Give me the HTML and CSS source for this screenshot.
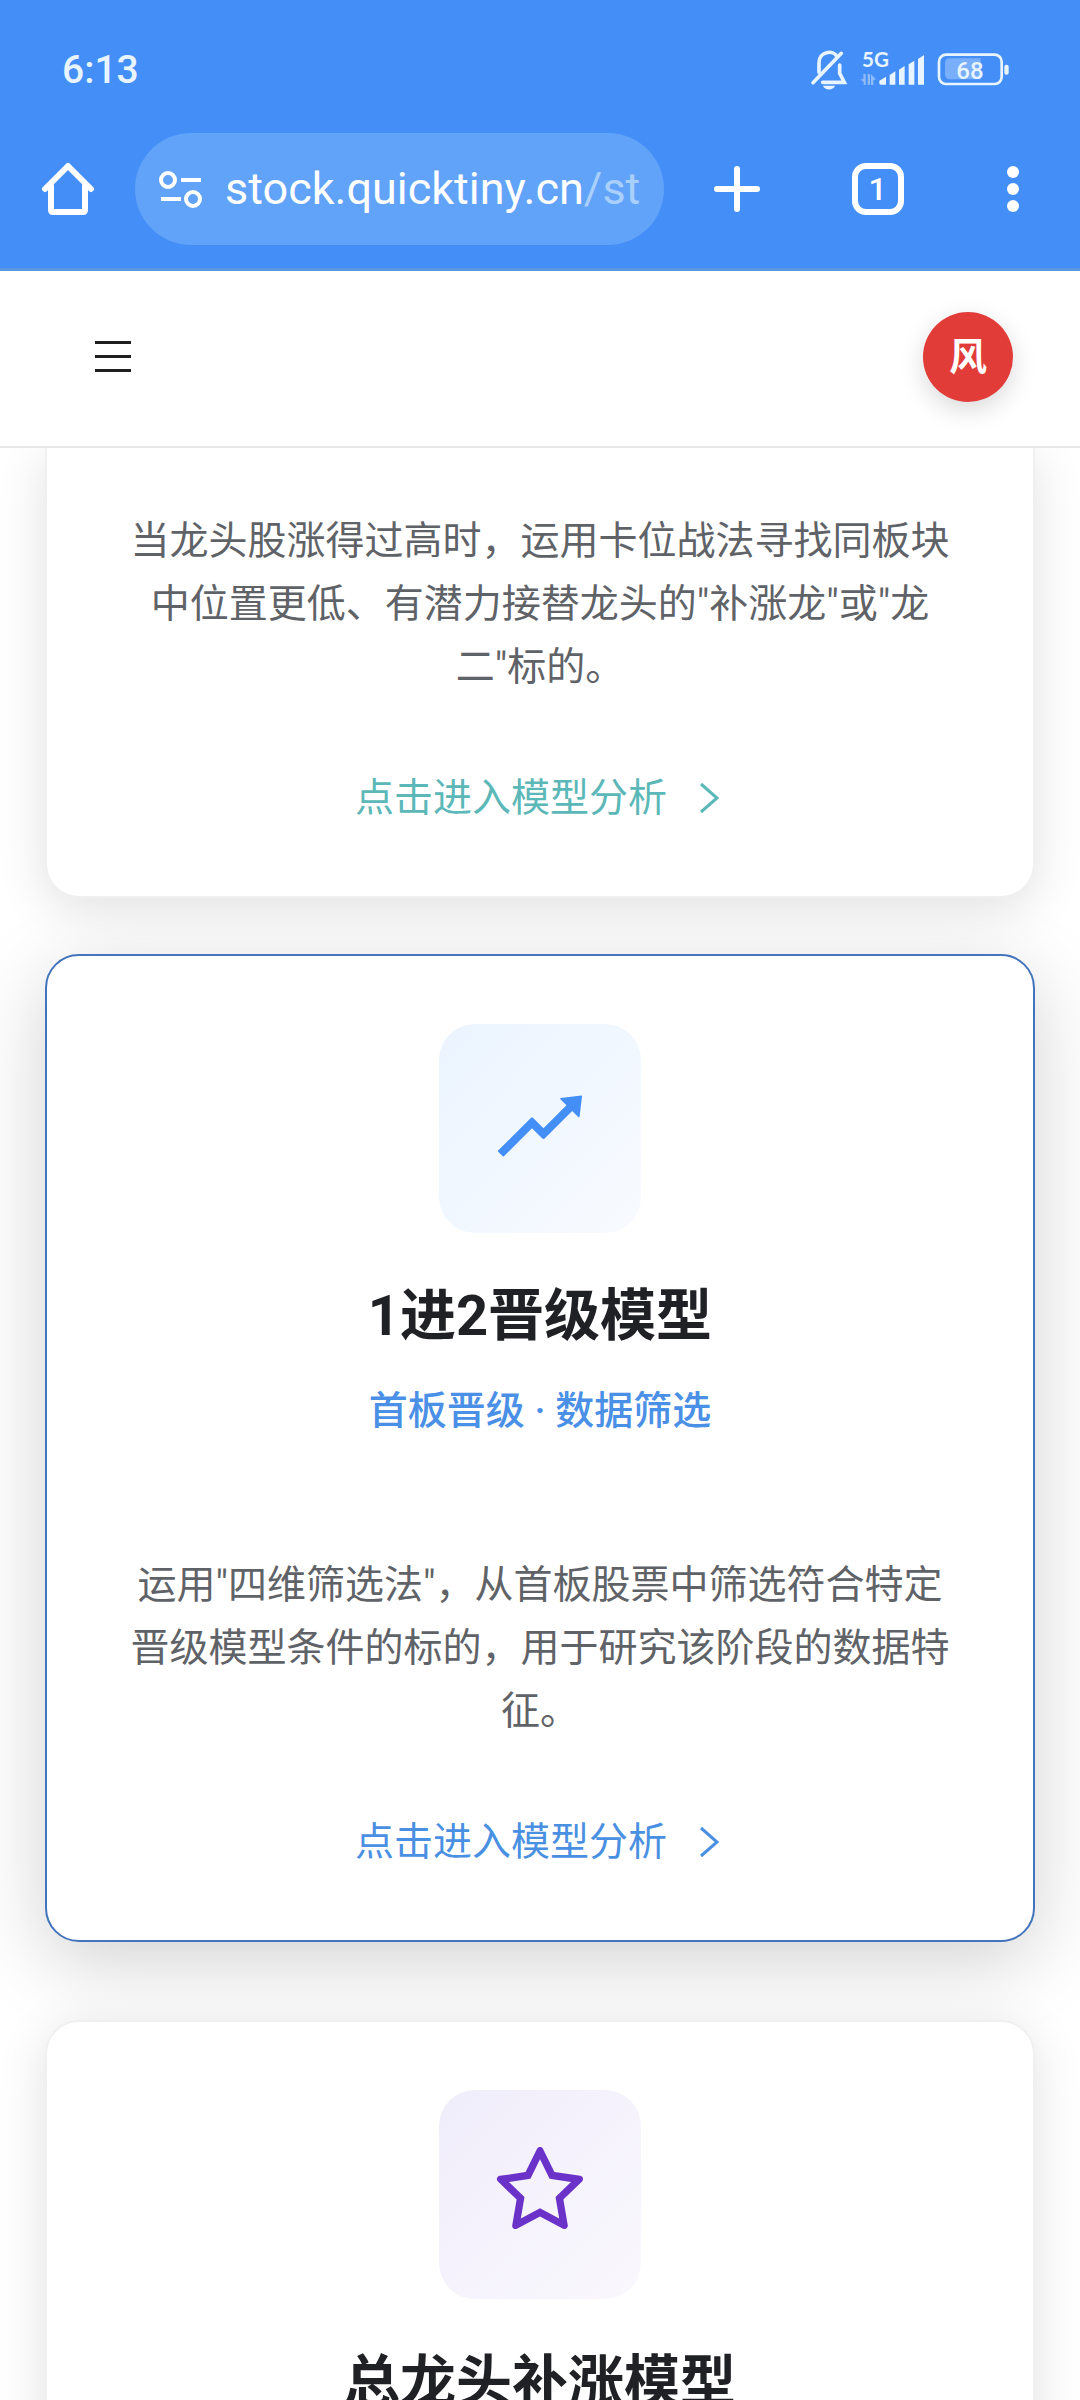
FILE: index.html
```html
<!DOCTYPE html>
<html lang="zh-CN">
<head>
  <meta charset="UTF-8">
  <meta name="viewport" content="width=device-width, initial-scale=1">
  <title>stock.quicktiny.cn</title>
  <link rel="stylesheet" href="styles.css">
</head>
<body>
  <div class="screen">
    <div class="browser">
      <div class="status-bar">
        <span class="clock">6:13</span>
        <svg class="status-icons" viewBox="90 69 600 162" fill="#e8f4ff">
          <!-- muted bell -->
          <g fill="none" stroke="#e8f4ff" stroke-width="11" stroke-linecap="round" stroke-linejoin="round">
            <path d="M117 157V128C117 94 160 88 171 110"/>
            <path d="M179 135V160L193 187H128" stroke-linejoin="miter"/>
            <path d="M99 188L184 100"/>
          </g>
          <path d="M129 197h36c-5 15-31 15-36 0z"/>
          <!-- signal -->
          <text class="network" x="246" y="142">5G</text>
          <path class="faint" d="M257 162v33h-6v-9l-10-8h9v-16zM263 162h7v32h-7zM273 195v-33l15 17h-8v16z"/>
          <path d="M298 190v-8l20-12v24h-16a4 4 0 0 1-4-4zM329 165l17-11v40h-17zM357 149l17-11v56h-17zM386 133l17-11v72h-17zM414 117l18-12v89h-18z"/>
          <!-- battery -->
          <rect x="477" y="104" width="188" height="88" rx="21" fill="none" stroke="#e8f4ff" stroke-width="8"/>
          <path class="charge" d="M510 115h92v63h-92q-15 0-15-15v-33q0-15 15-15z"/>
          <rect x="673" y="134" width="13" height="30" rx="6"/>
          <text class="level" x="570" y="176" text-anchor="middle">68</text>
        </svg>
      </div>
      <div class="toolbar">
        <button class="tool tool-home" aria-label="主页">
          <svg width="54" height="54" viewBox="0 0 54 54" fill="none" stroke="#fff" stroke-width="6" stroke-linecap="round" stroke-linejoin="round">
            <path d="M4 27L27 4L50 27"/>
            <path d="M10 24V48Q10 50 12 50H42Q44 50 44 48V24"/>
          </svg>
        </button>
        <button class="address">
          <svg class="site-info" width="44" height="38" viewBox="0 0 44 38" fill="none" stroke="#fff" stroke-width="4">
            <circle cx="9" cy="10" r="7"/>
            <path d="M22 10H42M2 29H22"/>
            <circle cx="34" cy="29" r="7"/>
          </svg>
          <span class="url">stock.quicktiny.cn<span class="path">/str</span></span>
        </button>
        <button class="tool tool-add" aria-label="新建标签页">
          <svg width="48" height="48" viewBox="0 0 48 48" stroke="#fff" stroke-width="6" stroke-linecap="round">
            <path d="M4 24H44M24 4V44"/>
          </svg>
        </button>
        <button class="tool tool-tabs" aria-label="标签页"><span class="tab-count">1</span></button>
        <button class="tool tool-more" aria-label="更多">
          <svg width="14" height="48" viewBox="0 0 14 48" fill="#fff">
            <circle cx="7" cy="7" r="6"/>
            <circle cx="7" cy="24" r="6"/>
            <circle cx="7" cy="41" r="6"/>
          </svg>
        </button>
      </div>
    </div>

    <header class="app-header">
      <button class="menu-btn" aria-label="菜单">
        <svg width="36" height="32" viewBox="0 0 36 32" fill="#1f1f1f">
          <path d="M0 0h36v3H0zM0 14h36v3H0zM0 28h36v3H0z"/>
        </svg>
      </button>
      <button class="avatar">风</button>
    </header>

    <main class="models">
      <article class="card card-teal card-scrolled">
        <p class="desc">当龙头股涨得过高时，运用卡位战法寻找同板块中位置更低、有潜力接替龙头的"补涨龙"或"龙二"标的。</p>
        <a class="enter" href="#">点击进入模型分析
          <svg width="26" height="34" viewBox="0 0 26 34" fill="none" stroke="currentColor" stroke-width="3"><path d="M2 3L18 17L2 31"/></svg>
        </a>
      </article>

      <article class="card card-blue card-active">
        <div class="icon">
          <svg width="104" height="104" viewBox="0 0 1024 1024" fill="currentColor">
            <path d="M917 211.1l-199.2 24c-6.6.8-9.4 8.9-4.7 13.6l59.3 59.3-226 226-101.8-101.7c-6.3-6.3-16.4-6.2-22.6 0L100.3 754.1a8.03 8.03 0 0 0 0 11.3l45 45.2c3.1 3.1 8.2 3.1 11.3 0L433.3 534 535 635.7c6.3 6.2 16.4 6.2 22.6 0L829 364.5l59.3 59.3a8.01 8.01 0 0 0 13.6-4.7l24-199.2c.7-5.1-3.7-9.5-8.9-8.8z"/>
          </svg>
        </div>
        <h2>1进2晋级模型</h2>
        <p class="subtitle">首板晋级 · 数据筛选</p>
        <p class="desc">运用"四维筛选法"，从首板股票中筛选符合特定晋级模型条件的标的，用于研究该阶段的数据特征。</p>
        <a class="enter" href="#">点击进入模型分析
          <svg width="26" height="34" viewBox="0 0 26 34" fill="none" stroke="currentColor" stroke-width="3"><path d="M2 3L18 17L2 31"/></svg>
        </a>
      </article>

      <article class="card card-purple">
        <div class="icon">
          <svg width="104" height="104" viewBox="0 0 1024 1024" fill="currentColor">
            <path d="M908.1 353.1l-253.9-36.9L540.7 86.1c-3.1-6.3-8.2-11.4-14.5-14.5-15.8-7.8-35-1.3-42.9 14.5L369.8 316.2l-253.9 36.9c-7 1-13.4 4.3-18.3 9.3a32.05 32.05 0 0 0 .6 45.3l183.7 179.1-43.4 252.9a31.95 31.95 0 0 0 46.4 33.7L512 754l227.1 119.4c6.2 3.3 13.4 4.4 20.3 3.2 17.4-3 29.1-19.5 26.1-36.9l-43.4-252.9 183.7-179.1c5-4.9 8.3-11.3 9.3-18.3 2.7-17.5-9.5-33.7-27-36.3zM664.8 561.6l36.1 210.3L512 672.7 323.1 772l36.1-210.3-152.8-149L417.6 382 512 190.7 606.4 382l211.2 30.7-152.8 148.9z"/>
          </svg>
        </div>
        <h2>总龙头补涨模型</h2>
      </article>
    </main>
  </div>
</body>
</html>
```
FILE: styles.css
```css
* {
  box-sizing: border-box;
}

body {
  margin: 0;
  font-family: Roboto, "Noto Sans CJK SC", sans-serif;
  background: #fff;
}

button {
  padding: 0;
  border: none;
  background: none;
  font-family: inherit;
  cursor: pointer;
}

svg {
  display: block;
  flex-shrink: 0;
}

.screen {
  display: flex;
  flex-direction: column;
  height: 100vh;
  overflow: hidden;
}

/* browser chrome */
.browser {
  flex-shrink: 0;
  background: #448ef7;
  border-bottom: 3px solid #5a98e2;
}

.status-bar {
  display: flex;
  align-items: center;
  justify-content: space-between;
  height: 133px;
  padding: 7px 70px 0 62px;
}

.clock {
  font-size: 39px;
  font-weight: 500;
  line-height: 48px;
  color: #e8f4ff;
}

.status-icons {
  width: 200px;
  height: 54px;
}

.network {
  font-family: Lato, sans-serif;
  font-size: 62px;
  font-weight: 700;
}

.level {
  font-size: 72px;
  font-weight: 500;
}

.faint {
  fill: #8fbdfc;
}

.charge {
  fill: #78aefa;
}

.toolbar {
  display: flex;
  align-items: center;
  padding-bottom: 23px;
}

.tool {
  display: flex;
  align-items: center;
  justify-content: center;
  flex-shrink: 0;
  width: 135px;
  height: 112px;
}

.tool-add {
  width: 146px;
}

.address {
  flex: 1;
  display: flex;
  align-items: center;
  gap: 22px;
  min-width: 0;
  height: 112px;
  padding: 0 24px;
  border-radius: 56px;
  background: #61a3f8;
}

.url {
  overflow: hidden;
  font-size: 45px;
  line-height: 60px;
  white-space: nowrap;
  color: #fff;
}

.path {
  color: #a9d0fd;
}

.tab-count {
  display: flex;
  align-items: center;
  justify-content: center;
  width: 52px;
  height: 52px;
  border: 6px solid #fff;
  border-radius: 14px;
  font-size: 32px;
  font-weight: 500;
  color: #fff;
}

/* app header */
.app-header {
  position: relative;
  z-index: 1;
  display: flex;
  flex-shrink: 0;
  align-items: center;
  justify-content: space-between;
  height: 177px;
  padding: 0 67px 3px 95px;
  background: #fff;
  border-bottom: 2px solid #e8e8eb;
}

.avatar {
  width: 90px;
  height: 90px;
  border-radius: 50%;
  background: #e23c39;
  box-shadow: 0 8px 24px rgba(0, 0, 0, 0.15);
  font-size: 38px;
  font-weight: 700;
  line-height: 90px;
  color: #fff;
}

/* model cards */
.models {
  padding: 0 45px;
}

.card {
  display: flex;
  flex-direction: column;
  align-items: center;
  margin-bottom: 56px;
  padding: 68px 80px 67px;
  border: 2px solid #f0f0f0;
  border-radius: 34px;
  background: #fff;
  box-shadow: 0 10px 50px rgba(0, 0, 0, 0.12);
  text-align: center;
}

.card-scrolled {
  padding-top: 62px;
  border-top: none;
  border-radius: 0 0 34px 34px;
}

.card-active {
  margin-bottom: 78px;
  border-color: #4474bc;
  box-shadow: 0 20px 80px rgba(0, 0, 0, 0.18);
}

.icon {
  display: flex;
  align-items: center;
  justify-content: center;
  width: 202px;
  height: 209px;
  margin-bottom: 44px;
  padding-bottom: 6px;
  border-radius: 36px;
}

.card-blue .icon {
  background: linear-gradient(135deg, #ebf4ff, #f8fbff);
  color: #448ef7;
}

.card-purple .icon {
  background: linear-gradient(135deg, #f0edfb, #faf8fd);
  color: #6a32c8;
}

h2 {
  margin: 0 0 25px;
  font-size: 56px;
  font-weight: 700;
  line-height: 78px;
  color: #202124;
}

.subtitle {
  margin: 0 0 112px;
  font-size: 39px;
  font-weight: 500;
  line-height: 62px;
  color: #4a90e6;
}

.desc {
  margin: 0 0 68px;
  font-size: 39px;
  line-height: 63px;
  color: #5f6368;
}

.enter {
  display: flex;
  align-items: center;
  gap: 32px;
  font-size: 39px;
  line-height: 62px;
  text-decoration: none;
}

.card-teal .enter {
  color: #5cb8b8;
}

.card-blue .enter {
  color: #4a90e2;
}
```
